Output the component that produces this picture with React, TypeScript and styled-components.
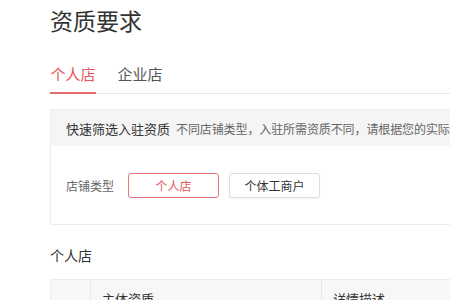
import React from "react";
import styled, { createGlobalStyle } from "styled-components";

const Global = createGlobalStyle`
  html, body { margin: 0; padding: 0; background: #fff; overflow: hidden; }
  body { font-family: "Noto Sans CJK SC", "Noto Sans", sans-serif; color: #333; }
`;

const Page = styled.div`
  width: 450px;
  height: 300px;
  overflow: hidden;
  padding: 4px 0 0 50px;
  box-sizing: border-box;
`;

const Title = styled.h1`
  margin: 0;
  font-size: 23px;
  font-weight: 400;
  line-height: 32px;
  color: #333;
  white-space: nowrap;
`;

const TabBar = styled.div`
  display: flex;
  gap: 21px;
  margin-top: 25px;
  border-bottom: 1px solid #e8e8e8;
  width: 500px;
`;

const Tab = styled.div<{ $active?: boolean }>`
  font-size: 15px;
  line-height: 20px;
  padding: 3px 0 8px;
  width: 46px;
  text-align: center;
  color: ${(p) => (p.$active ? "#e4575a" : "#555")};
  border-bottom: 2px solid ${(p) => (p.$active ? "#e66a6c" : "transparent")};
  margin-bottom: -1px;
  white-space: nowrap;
`;

const FilterBox = styled.div`
  margin-top: 15px;
  width: 500px;
  border: 1px solid #ececec;
  box-sizing: border-box;
`;

const FilterHead = styled.div`
  height: 36px;
  display: flex;
  align-items: center;
  padding-left: 15px;
  background: #f5f5f5;
  white-space: nowrap;
`;

const HeadTitle = styled.span`
  font-size: 13px;
  color: #333;
`;

const HeadHint = styled.span`
  font-size: 12px;
  color: #666;
  margin-left: 6px;
  letter-spacing: -0.1px;
`;

const FilterBody = styled.div`
  height: 78px;
  display: flex;
  align-items: center;
  padding-left: 15px;
  gap: 10px;
`;

const Label = styled.span`
  font-size: 12px;
  color: #666;
  width: 52px;
  white-space: nowrap;
`;

const TypeButton = styled.div<{ $active?: boolean }>`
  width: 91px;
  height: 25px;
  box-sizing: border-box;
  border: 1px solid ${(p) => (p.$active ? "#e8797b" : "#ddd")};
  border-radius: 3px;
  display: flex;
  align-items: center;
  justify-content: center;
  font-size: 12px;
  color: ${(p) => (p.$active ? "#e4575a" : "#333")};
  box-shadow: ${(p) => (p.$active ? "none" : "0 1px 2px rgba(0,0,0,0.06)")};
`;

const SectionLabel = styled.div`
  margin-top: 19px;
  font-size: 14px;
  line-height: 22px;
  color: #333;
`;

const Table = styled.div`
  margin-top: 13px;
  width: 500px;
  display: grid;
  grid-template-columns: 39px 231px 1fr;
  background: #f7f7f7;
  border: 1px solid #ececec;
  border-bottom: none;
`;

const Th = styled.div<{ $first?: boolean }>`
  height: 40px;
  box-sizing: border-box;
  padding: 9px 0 0 11px;
  font-size: 13px;
  color: #333;
  border-left: ${(p) => (p.$first ? "none" : "1px solid #e8e8e8")};
  white-space: nowrap;
`;

export default function App() {
  return (
    <>
      <Global />
      <Page>
        <Title>资质要求</Title>
        <TabBar>
          <Tab $active>个人店</Tab>
          <Tab>企业店</Tab>
        </TabBar>
        <FilterBox>
          <FilterHead>
            <HeadTitle>快速筛选入驻资质</HeadTitle>
            <HeadHint>不同店铺类型，入驻所需资质不同，请根据您的实际情况选择</HeadHint>
          </FilterHead>
          <FilterBody>
            <Label>店铺类型</Label>
            <TypeButton $active>个人店</TypeButton>
            <TypeButton>个体工商户</TypeButton>
          </FilterBody>
        </FilterBox>
        <SectionLabel>个人店</SectionLabel>
        <Table>
          <Th $first />
          <Th>主体资质</Th>
          <Th>详情描述</Th>
        </Table>
      </Page>
    </>
  );
}
